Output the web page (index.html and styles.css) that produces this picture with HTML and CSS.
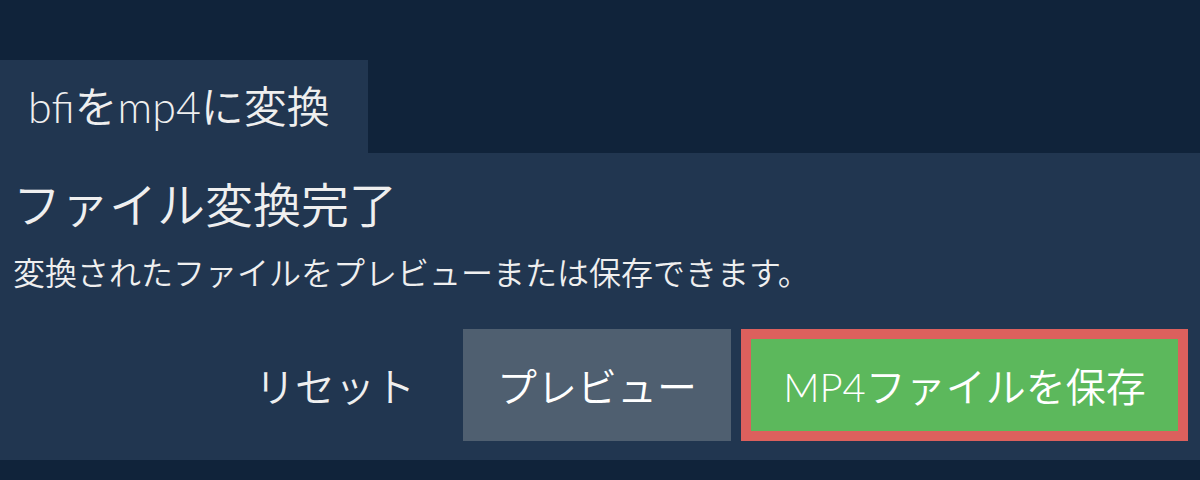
FILE: index.html
```html
<!DOCTYPE html>
<html lang="ja">
<head>
  <meta charset="UTF-8">
  <meta name="viewport" content="width=device-width, initial-scale=1.0">
  <title>bfiをmp4に変換</title>
  <link rel="stylesheet" href="styles.css">
</head>
<body>
  <!-- Converter tab -->
  <div class="tab-bar">
    <div class="tab">bfiをmp4に変換</div>
  </div>

  <!-- Result panel -->
  <div class="panel">
    <h1 class="panel-title">ファイル変換完了</h1>
    <p class="panel-text">変換されたファイルをプレビューまたは保存できます。</p>
    <div class="actions">
      <button class="btn btn-reset">リセット</button>
      <button class="btn btn-preview">プレビュー</button>
      <button class="btn btn-save">MP4ファイルを保存</button>
    </div>
  </div>
</body>
</html>
```

FILE: styles.css
```css
body {
  font-family: "Lato", "Noto Sans CJK JP", sans-serif;
  font-weight: 350;
  margin: 0;
  padding: 0;
  background-color: #10233a;
  color: #efefef;
  height: 480px;
  overflow: hidden;
}
.tab-bar {
  padding-top: 60px;
  display: flex;
}
.tab {
  background-color: #213650;
  height: 93px;
  width: 368px;
  box-sizing: border-box;
  padding-left: 28px;
  font-size: 43px;
  line-height: 93px;
  white-space: nowrap;
}
.panel {
  background-color: #213650;
  padding: 24px 12px 19px 13px;
}
.panel-title {
  margin: 0;
  font-size: 48px;
  font-weight: 350;
  line-height: 56px;
}
.panel-text {
  margin: 20px 0 0 0;
  font-size: 32px;
  line-height: 40px;
}
.actions {
  margin-top: 36px;
  display: flex;
  justify-content: flex-end;
  gap: 10px;
}
.btn {
  font-family: inherit;
  font-weight: 350;
  font-size: 40px;
  height: 112px;
  border: none;
  border-radius: 0;
  color: #efefef;
  cursor: pointer;
  white-space: nowrap;
}
.btn-reset {
  background: transparent;
  padding: 0 38px 0 40px;
}
.btn-preview {
  background-color: #4f5f70;
  color: #fff;
  width: 268px;
  padding: 0;
}
.btn-save {
  background-color: #5cb85c;
  color: #fff;
  border: 10px solid #dc605d;
  width: 447px;
  padding: 0;
}
.btn-preview:hover {
  background-color: #5a6b7d;
}
.btn-save:hover {
  background-color: #4cae4c;
}
```
